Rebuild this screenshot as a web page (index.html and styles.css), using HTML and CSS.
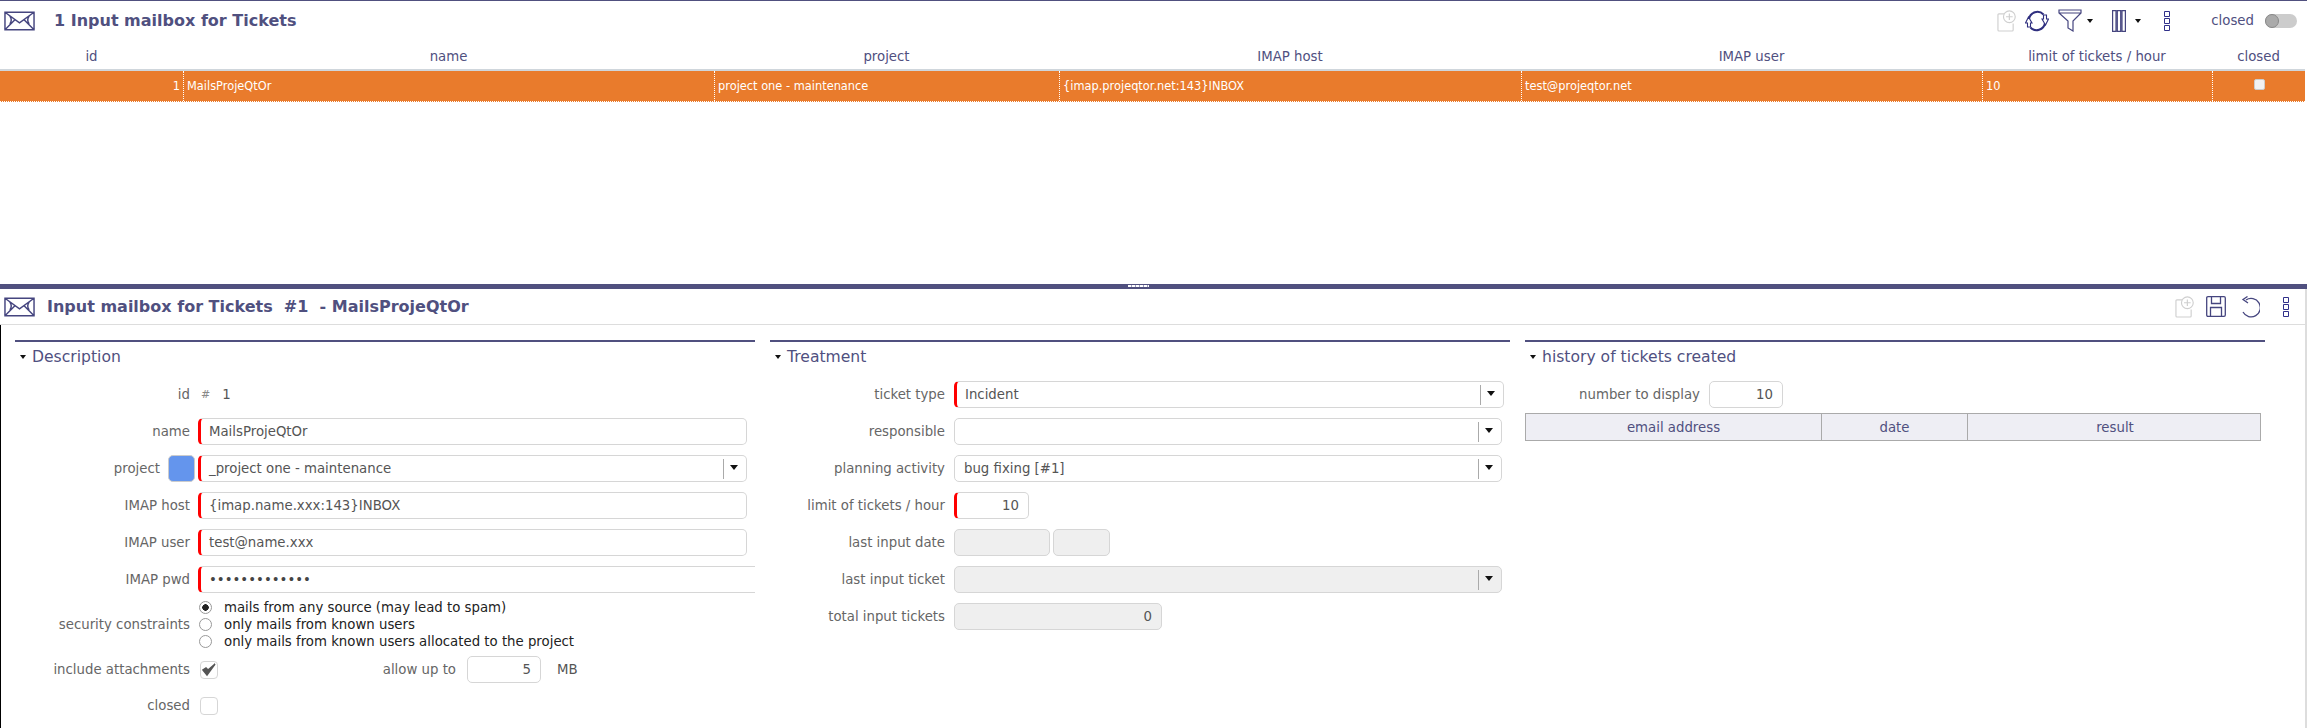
FILE: index.html
```html
<!DOCTYPE html>
<html lang="en">
<head>
<meta charset="utf-8">
<title>Input mailbox for Tickets</title>
<link rel="stylesheet" href="styles.css">
</head>
<body>
<svg class="sprites" width="0" height="0">
  <symbol id="mail" viewBox="0 0 32 20"><path d="M1 1H31V19H1ZM1 1L16 12L31 1M1 19L11 9M31 19L21 9M26 5Q23 9 26 13M6 5Q9 9 6 13" fill="none" stroke="currentColor" stroke-width="1.5"/></symbol>
  <symbol id="note" viewBox="0 0 20 23"><path d="M9 4H2Q1 4 1 5V21Q1 22 2 22H16Q17 22 17 21V14" fill="none" stroke="#cfcfcf" stroke-width="1.2"/><circle cx="13" cy="7" r="6.2" fill="#fff" stroke="#cfcfcf" stroke-width="1.2"/><path d="M13 3.5V10.500M9.500 7H16.500" stroke="#cfcfcf" stroke-width="1.2"/></symbol>
  <symbol id="sync" viewBox="0 0 24 22"><path d="M4 9A8.500 8.500 0 0 1 18.500 4.500M20 13A8.500 8.500 0 0 1 5.500 17.500" fill="none" stroke="currentColor" stroke-width="2"/><path d="M3.500 7L7 13H5.500V17H2.500V13H.5ZM20.500 15L17 9H18.500V5H21.500V9H23.500Z" fill="#fff" stroke="currentColor" stroke-width="1.100"/></symbol>
  <symbol id="filter" viewBox="0 0 24 23"><path d="M1 1H23V4L15 12V22L10 19V12L1 4ZM1 4H23" fill="none" stroke="currentColor" stroke-width="1.200"/></symbol>
  <symbol id="cols" viewBox="0 0 14 22"><path d="M.6 .6H4V21.400H.6ZM5.300 .6H8.700V21.400H5.300ZM10 .6H13.400V21.400H10Z" fill="none" stroke="currentColor" stroke-width="1.200"/></symbol>
  <symbol id="dots" viewBox="0 0 6 20"><path d="M.5 .5H5.500V5.500H.5ZM.5 7.500H5.500V12.500H.5ZM.5 14.500H5.500V19.500H.5Z" fill="none" stroke="currentColor" stroke-width="1"/></symbol>
  <symbol id="save" viewBox="0 0 20 21"><path d="M2 .7H18Q19.300 .7 19.300 2V19Q19.300 20.300 18 20.300H2Q.7 20.300 .7 19V2Q.7 .7 2 .7ZM5.500 .7V7.500H14.500V.7M4.500 20.300V11.500H15.500V20.300" fill="none" stroke="currentColor" stroke-width="1.300"/></symbol>
  <symbol id="undo" viewBox="0 0 20 22"><path d="M6 4A9.200 9.200 0 1 1 3 16M7.500 .5L3 3.500L8 7" fill="none" stroke="currentColor" stroke-width="1.300"/></symbol>
</svg>

<section class="list">
  <header class="list-head">
    <svg class="ic ic-mail-top"><use href="#mail"/></svg>
    <h1 class="list-title">1 Input mailbox for Tickets</h1>
    <div class="tools">
      <svg class="ic ic-note"><use href="#note"/></svg>
      <svg class="ic ic-sync"><use href="#sync"/></svg>
      <svg class="ic ic-filter"><use href="#filter"/></svg>
      <span class="caret caret-filter"></span>
      <svg class="ic ic-cols"><use href="#cols"/></svg>
      <span class="caret caret-cols"></span>
      <svg class="ic ic-dots"><use href="#dots"/></svg>
      <span class="toggle-label">closed</span>
      <span class="toggle"><span class="knob"></span></span>
    </div>
  </header>
  <div class="grid grid-head">
    <div>id</div><div>name</div><div>project</div><div>IMAP host</div><div>IMAP user</div><div>limit of tickets / hour</div><div>closed</div>
  </div>
  <div class="grid grid-row">
    <div class="num">1</div><div>MailsProjeQtOr</div><div>project one - maintenance</div><div>{imap.projeqtor.net:143}INBOX</div><div>test@projeqtor.net</div><div>10</div><div class="cell-check"><span class="mini-check"></span></div>
  </div>
</section>

<div class="splitter"><span class="handle"></span></div>

<section class="detail">
  <header class="detail-head">
    <svg class="ic ic-mail-detail"><use href="#mail"/></svg>
    <h2 class="detail-title">Input mailbox for Tickets&nbsp; #1 &nbsp;- MailsProjeQtOr</h2>
    <div class="tools">
      <svg class="ic ic-note2"><use href="#note"/></svg>
      <svg class="ic ic-save"><use href="#save"/></svg>
      <svg class="ic ic-undo"><use href="#undo"/></svg>
      <svg class="ic ic-dots2"><use href="#dots"/></svg>
    </div>
  </header>
  <div class="detail-body">
    <div class="pane">
      <h3 class="pane-title"><span class="caret"></span>Description</h3>
      <div class="rows">
        <div class="row row-id"><label>id</label><span class="hash">#</span><span class="idv">1</span></div>
        <div class="row"><label>name</label><span class="field req w-1">MailsProjeQtOr</span></div>
        <div class="row"><label class="lbl-project">project</label><span class="swatch"></span><span class="field req select w-1">_project one - maintenance<i class="arrow"></i></span></div>
        <div class="row"><label>IMAP host</label><span class="field req w-1">{imap.name.xxx:143}INBOX</span></div>
        <div class="row"><label>IMAP user</label><span class="field req w-1">test@name.xxx</span></div>
        <div class="row"><label>IMAP pwd</label><span class="field req w-pwd pwd">•••••••••••••</span></div>
      </div>
      <div class="radios-row">
        <label>security constraints</label>
        <div class="radios">
          <div class="radio-line"><span class="radio on"></span>mails from any source (may lead to spam)</div>
          <div class="radio-line"><span class="radio"></span>only mails from known users</div>
          <div class="radio-line"><span class="radio"></span>only mails from known users allocated to the project</div>
        </div>
      </div>
      <div class="row row-attach">
        <label>include attachments</label>
        <span class="check"><svg class="tick" viewBox="0 0 16 16"><path d="M2 8L6 13L14 2L7 8L5 6Z" fill="#555" stroke="#555" stroke-width="1.500"/></svg></span>
        <span class="allow">allow up to</span>
        <span class="field num-f w-allow">5</span>
        <span class="unit">MB</span>
      </div>
      <div class="row row-closed"><label>closed</label><span class="check"></span></div>
    </div>

    <div class="pane">
      <h3 class="pane-title"><span class="caret"></span>Treatment</h3>
      <div class="rows">
        <div class="row"><label>ticket type</label><span class="field req select w-2a">Incident<i class="arrow"></i></span></div>
        <div class="row"><label>responsible</label><span class="field select w-2"><i class="arrow"></i></span></div>
        <div class="row"><label>planning activity</label><span class="field select w-2">bug fixing [#1]<i class="arrow"></i></span></div>
        <div class="row"><label>limit of tickets / hour</label><span class="field req num-f w-limit">10</span></div>
        <div class="row"><label>last input date</label><span class="field off w-date"></span><span class="field off w-time"></span></div>
        <div class="row"><label>last input ticket</label><span class="field off select w-2"><i class="arrow"></i></span></div>
        <div class="row"><label>total input tickets</label><span class="field off num-f w-total">0</span></div>
      </div>
    </div>

    <div class="pane">
      <h3 class="pane-title"><span class="caret"></span>history of tickets created</h3>
      <div class="row row-number"><label>number to display</label><span class="field num-f w-number">10</span></div>
      <div class="history">
        <div>email address</div><div>date</div><div>result</div>
      </div>
    </div>
  </div>
</section>
</body>
</html>
```
FILE: styles.css
```css
* { box-sizing: border-box; }
html, body { margin: 0; padding: 0; }
body {
  width: 2307px;
  height: 728px;
  overflow: hidden;
  background: #fff;
  font-family: "DejaVu Sans", Verdana, sans-serif;
  font-size: 13.3px;
  color: #555;
}
.sprites { position: absolute; }
.ic { display: block; flex: none; color: #45457f; }
h1, h2, h3 { margin: 0; font-weight: normal; }

/* list */
.list { height: 284px; border-top: 1px solid #50507f; }
.list-head { display: flex; align-items: center; height: 39px; padding-left: 4px; }
.ic-mail-top { width: 31px; height: 20px; }
.list-title { margin-left: 19px; font-size: 16px; font-weight: bold; color: #50507f; }
.tools { display: flex; align-items: center; margin-left: auto; }
.list-head .tools { padding-right: 10px; }
.ic-note { width: 19px; height: 22px; }
.ic-sync { width: 24px; height: 22px; margin-left: 9px; color: #2f2f7f; }
.ic-filter { width: 24px; height: 23px; margin-left: 9px; }
.ic-cols { width: 14px; height: 22px; margin-left: 19px; }
.ic-dots { width: 6px; height: 20px; margin-left: 23px; color: #30308a; }
.caret { display: inline-block; flex: none; width: 0; height: 0; border-left: 3.500px solid transparent; border-right: 3.500px solid transparent; border-top: 4px solid #111; }
.caret-filter { margin-left: 5px; }
.caret-cols { margin-left: 9px; }
.toggle-label { margin-left: 41px; color: #50507f; }
.toggle { display: block; width: 32px; height: 14px; margin-left: 11px; background: #ccc; border-radius: 7px; }
.knob { display: block; width: 14px; height: 14px; border-radius: 50%; background: #aaa; border: 1px solid #888; }

.grid { display: grid; grid-template-columns: 183px 531px 345px 462px 461px 230px 93px; width: 2305px; }
.grid-head { height: 31px; padding-top: 4px; align-items: center; text-align: center; color: #50507f; border-bottom: 2px solid #cfd6dc; }
.grid-row { height: 31px; background: #e97b2c; color: #fff; font-size: 11.400px; border-bottom: 1px dotted #fff; }
.grid-row > div { display: flex; align-items: center; padding-left: 3px; border-left: 1px dotted #fff; }
.grid-row > div:first-child { border-left: 0; justify-content: flex-end; padding-right: 3px; }
.grid-row .cell-check { justify-content: center; align-items: flex-start; padding: 8px 0 0; }
.mini-check { display: block; width: 11px; height: 11px; background: #f2f2f2; border: 1px solid #ccc; border-radius: 2px; }

.splitter { position: relative; height: 5px; background: #50507f; }
.handle { position: absolute; left: 1128px; top: 1px; width: 21px; height: 2px; background: repeating-linear-gradient(90deg, #fff 0 3px, #9d9dbd 3px 4px); }

/* detail */
.detail { height: 439px; border-right: 2px solid #ddd; }
.detail-head { display: flex; align-items: center; height: 36px; padding-left: 4px; border-bottom: 1px solid #ddd; }
.ic-mail-detail { width: 31px; height: 20px; }
.detail-title { margin-left: 12px; font-size: 16px; font-weight: bold; color: #50507f; white-space: pre; }
.detail-head .tools { padding-right: 16px; }
.ic-note2 { width: 19px; height: 22px; }
.ic-save { width: 20px; height: 21px; margin-left: 12px; }
.ic-undo { width: 20px; height: 22px; margin-left: 14px; }
.ic-dots2 { width: 6px; height: 20px; margin-left: 23px; color: #30308a; }

.detail-body { display: flex; gap: 15px; height: 403px; padding: 15px 0 0 14px; border-left: 1px solid #000; }
.pane { flex: none; width: 740px; border-top: 2px solid #50507f; }
.pane-title { display: flex; align-items: center; height: 29px; padding-left: 5px; font-size: 15.600px; color: #50507f; }
.pane-title .caret { margin-right: 6px; }

.rows { display: flex; flex-direction: column; gap: 10px; padding-top: 10px; }
.row { display: flex; align-items: center; height: 27px; }
.row label, .radios-row label { flex: none; width: 175px; text-align: right; margin-right: 9px; color: #666; }
.pane:first-child .row label, .pane:first-child .radios-row label { margin-right: 8px; }
.pane:first-child .row .lbl-project { width: 145px; }

.field { display: flex; align-items: center; position: relative; flex: none; height: 27px; padding: 0 9px; border: 1px solid #d6d6d6; border-radius: 5px; background: #fff; color: #555; }
.field.req { border-left: 3px solid #f00; padding-left: 8px; }
.field.off { background: #efefef; }
.num-f { justify-content: flex-end; }
.w-1 { width: 549px; }
.w-pwd { width: 557px; border-right: 0; border-radius: 5px 0 0 5px; }
.pwd { color: #444; }
.w-2a { width: 550px; }
.w-2 { width: 548px; }
.w-limit { width: 75px; }
.w-date { width: 96px; }
.w-time { width: 57px; margin-left: 3px; }
.w-total { width: 208px; }
.w-number { width: 74px; }
.w-allow { width: 74px; }
.arrow { position: absolute; right: 0; top: 3px; width: 23px; height: 20px; border-left: 1px solid #aaa; }
.arrow::after { content: ""; position: absolute; left: 6px; top: 6px; border-left: 4px solid transparent; border-right: 4px solid transparent; border-top: 5px solid #111; }

.swatch { flex: none; width: 27px; height: 27px; margin-right: 3px; background: #6495ed; border: 1px solid #ccc; border-radius: 5px; }

.radios-row { display: flex; align-items: center; margin-top: 6px; }
.radios { display: flex; flex-direction: column; }
.radio-line { display: flex; align-items: center; height: 17px; color: #222; }
.radio { flex: none; width: 13px; height: 13px; margin: 0 12px 0 1px; border: 1px solid #999; border-radius: 50%; background: #fff; }
.radio.on { background: radial-gradient(circle, #222 0 3px, #fff 3.500px); }

.row-attach { margin-top: 6px; }
.row-closed { margin-top: 9px; }
.check { display: block; flex: none; width: 18px; height: 18px; margin-left: 2px; border: 1px solid #d6d6d6; border-radius: 4px; }
.tick { display: block; width: 16px; height: 16px; }
.allow { flex: none; width: 238px; margin-right: 11px; text-align: right; color: #666; }
.unit { margin-left: 16px; color: #555; }

.hash { margin-left: 3px; color: #888; font-size: 11px; }
.idv { margin-left: 12px; color: #555; }
.row-number { margin-top: 10px; }
.history { display: grid; grid-template-columns: 295px 146px 295px; width: 736px; height: 28px; margin-top: 5px; background: #eeeef4; border: 1px solid #aaa; color: #50507f; }
.history > div { display: flex; align-items: center; justify-content: center; }
.history > div + div { border-left: 1px solid #aaa; }
```
